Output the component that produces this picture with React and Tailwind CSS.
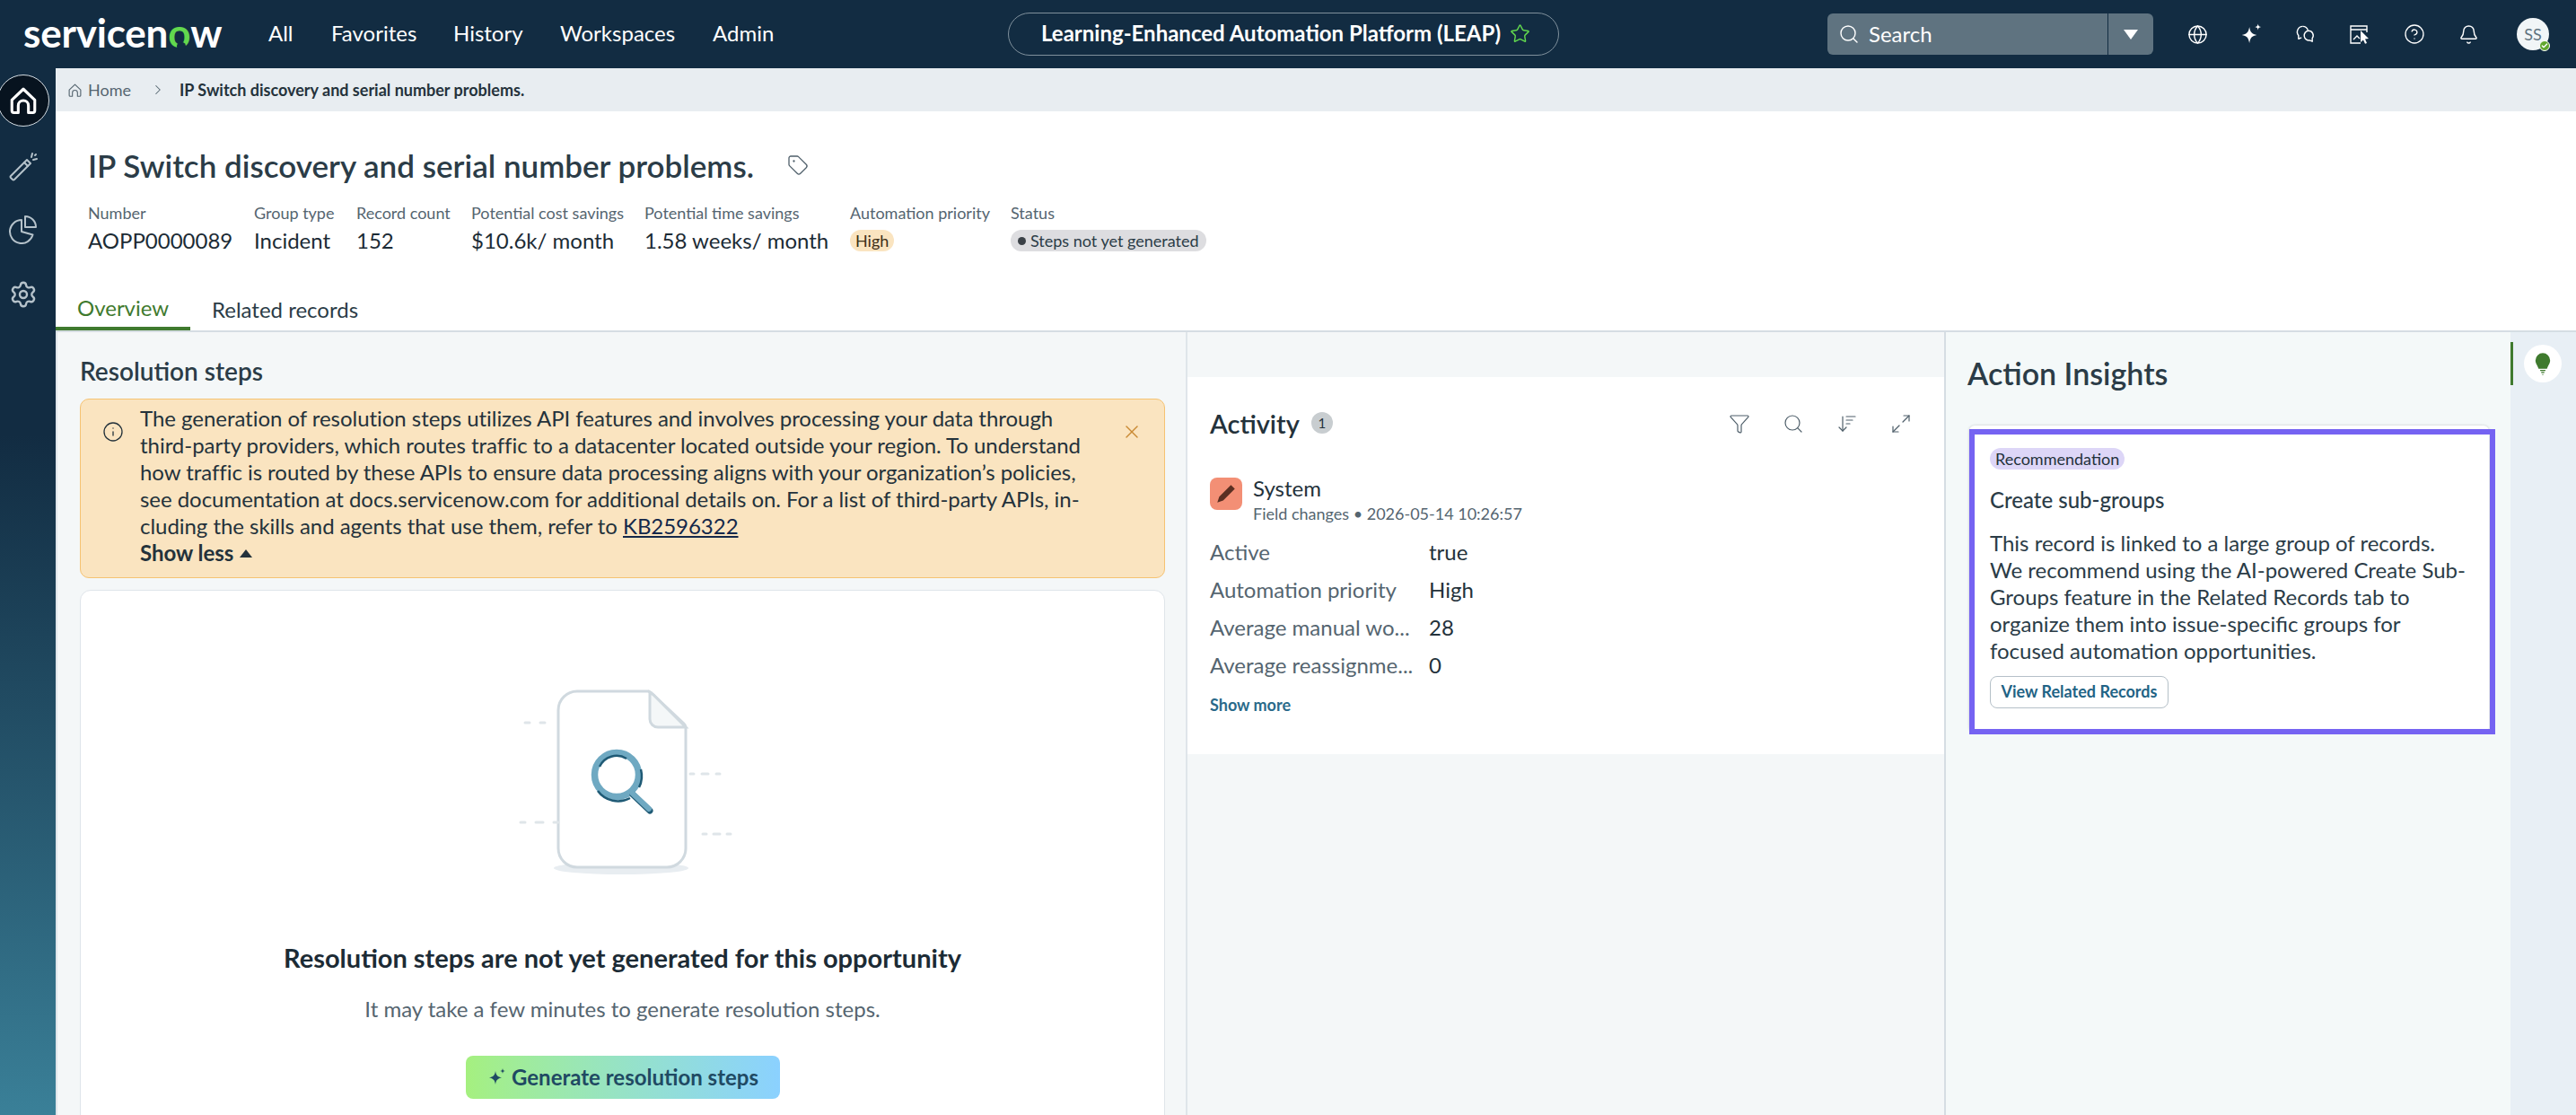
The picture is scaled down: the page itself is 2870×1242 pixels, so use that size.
import {
  ArrowDownWideNarrow,
  Bell,
  Check,
  ChevronRight,
  CircleHelp,
  Filter,
  Globe,
  Info,
  Maximize2,
  Search,
  Settings,
  Star,
  Tag,
  X,
} from 'lucide-react';

const font = { fontFamily: 'Lato, "Noto Sans", sans-serif' };

function Sparkle({ className }) {
  return (
    <svg viewBox="0 0 24 24" className={className} fill="currentColor">
      <path d="M10 5c.8 5 2.400 6.600 7 7.400-4.600.8-6.200 2.400-7 7.600-.8-5.200-2.400-6.800-7-7.600 4.600-.8 6.200-2.400 7-7.400z" />
      <path d="M18 2c.3 2 .9 2.700 3 3-2.100.3-2.700 1-3 3-.3-2-.9-2.700-3-3 2.100-.3 2.700-1 3-3z" />
    </svg>
  );
}

function HouseIcon({ className, strokeWidth }) {
  return (
    <svg viewBox="0 0 24 24" className={className} fill="none" stroke="currentColor" strokeWidth={strokeWidth} strokeLinejoin="round">
      <path d="M3 11.500L12 3l9 8.500V20a1.500 1.500 0 0 1-1.500 1.500H16V16a4 4 0 0 0-8 0v5.500H4.500A1.500 1.500 0 0 1 3 20z" />
    </svg>
  );
}

function TopBar() {
  const links = [
    ['All', 'w-[70px]'],
    ['Favorites', 'w-[136px]'],
    ['History', 'w-[119px]'],
    ['Workspaces', 'w-[170px]'],
    ['Admin', 'w-[80px]'],
  ];
  return (
    <header className="flex h-[76px] shrink-0 items-center bg-[#122c42] text-white">
      <div className="ml-[26px] w-[273px] pb-[5px] text-[44px] leading-none font-bold tracking-[-0.2px]">
        servicen
        <span className="relative text-[#62d84e]">
          o
          <span className="absolute bottom-[6px] left-[10px] h-[9px] w-[10px] rounded-full bg-[#122c42]" />
        </span>
        w
      </div>
      <nav className="flex w-[824px] pb-[2px] text-[24px]">
        {links.map(([name, w]) => (
          <a key={name} className={w}>
            {name}
          </a>
        ))}
      </nav>
      <div className="flex h-[48px] w-[614px] items-center gap-[10px] rounded-full border border-[#7f909c] pb-[2px] pl-[36px] text-[24px] font-bold">
        <span>Learning-Enhanced Automation Platform (LEAP)</span>
        <Star className="h-[23px] w-[23px] text-[#62d84e]" strokeWidth={1.5} />
      </div>
      <div className="ml-[299px] flex h-[46px] w-[363px] shrink-0 rounded-[6px] bg-[#5f7380]">
        <div className="flex flex-1 items-center gap-[10px] border-r border-[#122c42] pb-[1px] pl-[12px] text-[24px]">
          <Search className="h-[24px] w-[24px]" strokeWidth={1.4} />
          <span>Search</span>
        </div>
        <div className="flex w-[50px] items-center justify-center">
          <span className="h-0 w-0 border-x-[8px] border-t-[11px] border-x-transparent border-t-white" />
        </div>
      </div>
      <div className="ml-[38px] flex items-center gap-[37px] text-white">
        <Globe className="h-[23px] w-[23px] shrink-0" strokeWidth={1.5} />
        <Sparkle className="-my-[2px] h-[27px] w-[23px] shrink-0 scale-125" />
        <svg viewBox="0 0 24 24" className="h-[23px] w-[23px] shrink-0" fill="none" stroke="currentColor" strokeWidth="1.500" strokeLinejoin="round">
          <path d="M9 2.500a6.500 6.500 0 0 0-5 10.600V17l3.500-1.500" />
          <path d="M9 2.500a6.500 6.500 0 0 1 6 4.500" />
          <path d="M15.500 7.500a5.500 5.500 0 0 1 4.500 8.800V20l-3-1.300a5.500 5.500 0 1 1-1.500-11.200z" />
        </svg>
        <svg viewBox="0 0 24 24" className="h-[24px] w-[24px] shrink-0" fill="none" stroke="currentColor" strokeWidth="1.400">
          <path d="M20 10V3H2v19h11M2 7h18M5 18l4-4 3 3" />
          <path d="M13 8l9 9-4 .6 2 4.400-2 .8-2-4.400-3 2.600z" fill="white" stroke="none" />
        </svg>
        <CircleHelp className="h-[24px] w-[24px] shrink-0" strokeWidth={1.3} />
        <Bell className="h-[23px] w-[23px] shrink-0" strokeWidth={1.5} />
        <div className="relative ml-[5px] flex h-[36px] w-[36px] shrink-0 items-center justify-center rounded-full bg-[#f1f5f7] text-[18px] text-[#5f7380]">
          SS
          <span className="absolute -right-[1px] -bottom-[1px] flex h-[12px] w-[12px] items-center justify-center rounded-full border border-white bg-[#62a72e]">
            <Check className="h-[8px] w-[8px] text-white" strokeWidth={4} />
          </span>
        </div>
      </div>
    </header>
  );
}

function SideBar() {
  return (
    <aside className="flex w-[62px] shrink-0 flex-col items-start bg-gradient-to-b from-[#122c42] via-[#122c42] via-[35%] to-[#3a8098] text-[#b5c2ca]">
      <div className="mt-[7px] -ml-[3px] flex h-[58px] w-[58px] items-center justify-center rounded-full border border-[#d5dde3] bg-[#07131f] text-white">
        <HouseIcon className="h-[34px] w-[34px]" strokeWidth={2.2} />
      </div>
      <svg viewBox="0 0 34 34" className="mt-[27px] ml-[9px] h-[34px] w-[34px]" fill="none" stroke="currentColor" strokeWidth="2" strokeLinecap="round" strokeLinejoin="round">
        <path d="M3 28L21 10l4 4L7 32a1.500 1.500 0 0 1-2 0l-2-2a1.500 1.500 0 0 1 0-2z" />
        <path d="M18 13l4 4M27 3l-1 4M32 9l-4 1M31 4l-1 1" />
      </svg>
      <svg viewBox="0 0 34 34" className="mt-[36px] ml-[9px] h-[34px] w-[34px]" fill="none" stroke="currentColor" strokeWidth="2" strokeLinejoin="round">
        <path d="M15 7a13 13 0 1 0 12.500 16.500L15 20z" />
        <path d="M19 3a12 12 0 0 1 12 12H19z" />
      </svg>
      <Settings className="mt-[40px] ml-[10px] h-[32px] w-[32px]" strokeWidth={1.8} />
    </aside>
  );
}

function MetaItem({ label, children, w }) {
  return (
    <div className={w}>
      <div className="text-[18px] leading-[22px] text-[#556570]">{label}</div>
      <div className="mt-[5px] flex h-[30px] items-center text-[24px] leading-[30px] text-[#1c2b35]">{children}</div>
    </div>
  );
}

function Header() {
  return (
    <section className="flex h-[244px] shrink-0 flex-col bg-white">
      <div className="flex items-center gap-[37px] pt-[38px] pl-[36px]">
        <h1 className="text-[35px] leading-[44px] font-semibold text-[#2b3c47]">
          IP Switch discovery and serial number problems.
        </h1>
        <Tag className="h-[24px] w-[24px] text-[#4f5f6a]" strokeWidth={1.3} />
      </div>
      <div className="mt-[20px] flex pl-[36px]">
        <MetaItem label="Number" w="w-[185px]">AOPP0000089</MetaItem>
        <MetaItem label="Group type" w="w-[114px]">Incident</MetaItem>
        <MetaItem label="Record count" w="w-[128px]">152</MetaItem>
        <MetaItem label="Potential cost savings" w="w-[193px]">$10.6k/ month</MetaItem>
        <MetaItem label="Potential time savings" w="w-[229px]">1.58 weeks/ month</MetaItem>
        <MetaItem label="Automation priority" w="w-[179px]">
          <span className="inline-flex h-[24px] items-center rounded-full bg-[#fae4c0] px-[6px] text-[18px] text-[#3d2f17]">High</span>
        </MetaItem>
        <MetaItem label="Status" w="w-[220px]">
          <span className="inline-flex h-[24px] items-center gap-[5px] rounded-full bg-[#dddde0] px-[8px] text-[18px] whitespace-nowrap text-[#2b3c47]">
            <span className="h-[9px] w-[9px] rounded-full bg-[#3b4147]" />
            Steps not yet generated
          </span>
        </MetaItem>
      </div>
      <div className="mt-auto flex h-[49px]">
        <div className="flex w-[150px] items-center border-b-[4px] border-[#3f7a2e] pt-[2px] pl-[24px] text-[24px] text-[#3f7a2e]">Overview</div>
        <div className="flex items-center pt-[2px] pl-[24px] text-[24px] text-[#2b3c47]">Related records</div>
      </div>
    </section>
  );
}

function DocIllustration() {
  return (
    <svg viewBox="0 0 400 280" className="ml-[410px] block h-[280px] w-[400px]" fill="none">
      <ellipse cx="192" cy="247" rx="75" ry="7" fill="#e8edf1" />
      <path d="M143 50a21 21 0 0 0-21 21v154a21 21 0 0 0 21 21h100a21 21 0 0 0 21-21V90a6 6 0 0 0-2-4l-34-32a10 10 0 0 0-6-4z" fill="#fff" stroke="#d0d9df" strokeWidth="3" />
      <path d="M224 51v30a9 9 0 0 0 9 9h31l-36-36z" fill="#f4f7f8" stroke="#d0d9df" strokeWidth="3" />
      <path d="M85 85h5M102 85h5M80 196h5M97 196h8M117 196h5M269 142h4M282 142h7M298 142h4M283 209h4M295 209h7M310 209h4" stroke="#dfe5e9" strokeWidth="3" strokeLinecap="round" />
      <circle cx="187" cy="143" r="24.500" stroke="#6fa9c2" strokeWidth="7.500" />
      <path d="M168 134a21 21 0 0 1 30-9M166 161a28 28 0 0 0 36 8M214 137a28 28 0 0 1-2 20" stroke="#1f5a75" strokeWidth="2.500" />
      <path d="M205 165l19 18" stroke="#1f5a75" strokeWidth="7" strokeLinecap="round" />
      <path d="M204 163l19 18" stroke="#6fa9c2" strokeWidth="6" strokeLinecap="round" />
    </svg>
  );
}

function ResolutionSteps() {
  return (
    <div className="h-full w-[1261px] shrink-0 overflow-hidden border-r-2 border-l-2 border-[#dfe5ea] bg-[#f4f7f8] pr-[23px] pl-[25px]">
      <h2 className="pt-[25px] text-[28px] leading-[36px] font-semibold text-[#2b3c47]">Resolution steps</h2>
      <div className="relative mt-[13px] h-[200px] rounded-[10px] border border-[#f5c272] bg-[#fae4c0] pt-[6px] pl-[66px] text-[24px] leading-[30px] tracking-[-0.04px] text-[#24323b]">
        <Info className="absolute top-[24px] left-[24px] h-[24px] w-[24px]" strokeWidth={1.3} />
        <X className="absolute top-[24px] right-[24px] h-[24px] w-[24px] text-[#c98a34]" strokeWidth={1.4} />
        <p>The generation of resolution steps utilizes API features and involves processing your data through</p>
        <p>third-party providers, which routes traffic to a datacenter located outside your region. To understand</p>
        <p>how traffic is routed by these APIs to ensure data processing aligns with your organization’s policies,</p>
        <p>see documentation at docs.servicenow.com for additional details on. For a list of third-party APIs, in-</p>
        <p>
          cluding the skills and agents that use them, refer to{' '}
          <a className="text-[#14284a] underline">KB2596322</a>
        </p>
        <div className="flex items-center gap-[7px] font-bold">
          Show less
          <span className="h-0 w-0 border-x-[7px] border-b-[9px] border-x-transparent border-b-[#24323b]" />
        </div>
      </div>
      <div className="mt-[13px] h-[700px] rounded-[12px] border border-[#dfe5ea] bg-white pt-[62px] text-center">
        <DocIllustration />
        <h3 className="mt-[48px] text-[29px] leading-[38px] font-bold text-[#1c2b35]">
          Resolution steps are not yet generated for this opportunity
        </h3>
        <p className="mt-[22px] text-[24px] leading-[32px] text-[#556570]">It may take a few minutes to generate resolution steps.</p>
        <button className="mt-[36px] inline-flex h-[48px] w-[350px] items-center justify-center gap-[4px] rounded-[8px] bg-gradient-to-r from-[#a5f07f] to-[#8bd1ff] text-[24px] font-bold text-[#1f4a63]">
          <Sparkle className="h-[24px] w-[24px]" />
          Generate resolution steps
        </button>
      </div>
    </div>
  );
}

function Activity() {
  const rows = [
    ['Active', 'true'],
    ['Automation priority', 'High'],
    ['Average manual wo...', '28'],
    ['Average reassignme...', '0'],
  ];
  return (
    <div className="h-full w-[843px] shrink-0 bg-[#f4f7f8] pt-[50px]">
      <div className="h-[420px] bg-white px-[25px]">
        <div className="flex items-center pt-[30px]">
          <h2 className="text-[29px] leading-[44px] font-semibold text-[#24323b]">Activity</h2>
          <span className="mt-[-2px] ml-[13px] flex h-[24px] w-[24px] items-center justify-center rounded-full bg-[#c8cdd0] text-[15px] text-[#24323b]">1</span>
          <div className="ml-auto flex gap-[36px] pr-[11px] text-[#4f5f6a]">
            <Filter className="h-[24px] w-[24px]" strokeWidth={1.2} />
            <Search className="h-[24px] w-[24px]" strokeWidth={1.2} />
            <ArrowDownWideNarrow className="h-[24px] w-[24px]" strokeWidth={1.2} />
            <Maximize2 className="h-[24px] w-[24px]" strokeWidth={1.2} />
          </div>
        </div>
        <div className="mt-[36px] flex gap-[12px]">
          <div className="mt-[2px] flex h-[36px] w-[36px] items-center justify-center rounded-[8px] bg-[#f38f75]">
            <svg viewBox="0 0 24 24" className="h-[26px] w-[26px]" fill="#5a2f22">
              <path d="M17 3l4 4L9 19l-6 2 2-6zM15 5l4 4" />
            </svg>
          </div>
          <div>
            <div className="text-[24px] leading-[28px] text-[#24323b]">System</div>
            <div className="mt-[2px] text-[18px] leading-[24px] text-[#556570]">Field changes • 2026-05-14 10:26:57</div>
          </div>
        </div>
        <dl className="mt-[10px]">
          {rows.map(([k, v]) => (
            <div key={k} className="flex h-[42px] items-center text-[24px]">
              <dt className="w-[244px] text-[#556570]">{k}</dt>
              <dd className="text-[#24323b]">{v}</dd>
            </div>
          ))}
        </dl>
        <a className="mt-[11px] block text-[18px] leading-[24px] font-bold text-[#2a6a8a]">Show more</a>
      </div>
    </div>
  );
}

function ActionInsights() {
  return (
    <div className="h-full flex-1 border-l-2 border-[#d5dde3] bg-[#f4f9f9] pl-[24px]">
      <h2 className="pt-[24px] text-[34px] leading-[44px] font-semibold text-[#2b3c47]">Action Insights</h2>
      <div className="relative mt-[36px] ml-[2px] h-[342px] w-[579px] rounded-[6px] bg-white pt-[25px] pl-[23px] shadow-[0_0_3px_rgba(0,0,0,0.2)]">
        <div className="absolute top-[4px] -right-[7px] -bottom-[2px] left-0 border-[6px] border-[#7563f2]" />
        <span className="inline-flex h-[24px] items-center rounded-full bg-[#ddd6f7] px-[6px] text-[18px] text-[#24323b]">Recommendation</span>
        <h3 className="mt-[18px] text-[24px] leading-[30px] font-medium text-[#2b3c47]">Create sub-groups</h3>
        <p className="mt-[18px] text-[24px] leading-[30px] text-[#2b3c47]">
          This record is linked to a large group of records.
          <br />
          We recommend using the AI-powered Create Sub-
          <br />
          Groups feature in the Related Records tab to
          <br />
          organize them into issue-specific groups for
          <br />
          focused automation opportunities.
        </p>
        <button className="mt-[13px] h-[36px] w-[199px] rounded-[8px] border border-[#b5c0c8] bg-white text-[18px] font-bold text-[#1f6385]">View Related Records</button>
      </div>
    </div>
  );
}

function InsightStrip() {
  return (
    <div className="h-full w-[73px] shrink-0 bg-[#e8eff5] pt-[11px]">
      <div className="flex h-[48px] items-center border-l-[3px] border-[#3f7a2e] pl-[12px]">
        <div className="flex h-[42px] w-[42px] items-center justify-center rounded-full bg-white">
          <svg viewBox="0 0 24 24" className="h-[28px] w-[28px]" fill="#3f7a2e">
            <path d="M12 2a7 7 0 0 0-7 7c0 3 2 4.500 3 8h8c1-3.500 3-5 3-8a7 7 0 0 0-7-7z" />
            <path d="M9.500 18.500h5M10.500 20.500h3M11.500 22.500h1" stroke="#3f7a2e" fill="none" />
          </svg>
        </div>
      </div>
    </div>
  );
}

export default function App() {
  return (
    <div className="flex h-[1242px] w-[2870px] flex-col overflow-hidden bg-white" style={font}>
      <TopBar />
      <div className="flex min-h-0 flex-1">
        <SideBar />
        <main className="flex min-w-0 flex-1 flex-col">
          <div className="flex h-[48px] shrink-0 items-center bg-[#e8edf1] pl-[13px] text-[18px] text-[#556570]">
            <HouseIcon className="h-[17px] w-[17px]" strokeWidth={1.6} />
            <span className="ml-[6px]">Home</span>
            <ChevronRight className="ml-[21px] h-[18px] w-[18px]" strokeWidth={1.4} />
            <span className="ml-[15px] font-bold text-[#24323b]">IP Switch discovery and serial number problems.</span>
          </div>
          <Header />
          <div className="flex min-h-0 flex-1 border-t-2 border-[#d5dde3]">
            <ResolutionSteps />
            <Activity />
            <ActionInsights />
            <InsightStrip />
          </div>
        </main>
      </div>
    </div>
  );
}
